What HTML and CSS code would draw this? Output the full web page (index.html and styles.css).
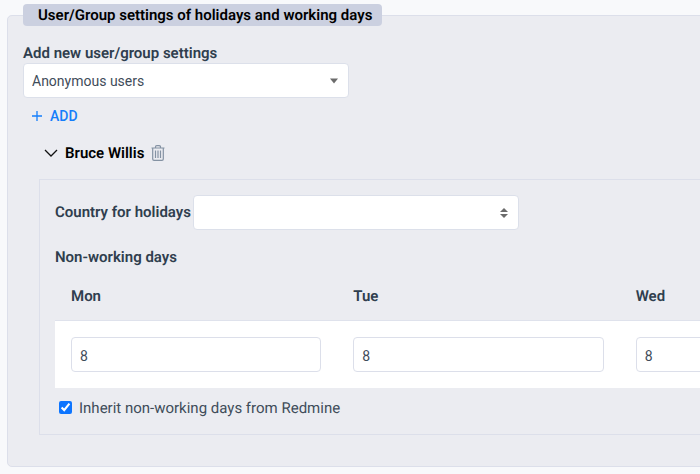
FILE: index.html
```
<!DOCTYPE html>
<html lang="en">
<head>
<meta charset="utf-8">
<title>Holidays and working days</title>
<link rel="stylesheet" href="styles.css">
</head>
<body>
<main class="page">
  <fieldset class="settings">
    <legend class="settings-title">User/Group settings of holidays and working days</legend>
    <label class="field-label" for="group">Add new user/group settings</label>
    <div class="select-box">
      <select class="select" id="group"><option>Anonymous users</option></select>
      <svg class="select-arrow" width="8" height="6" viewBox="0 0 8 6" aria-hidden="true"><path d="M0 .5h8L4 5.5z"/></svg>
    </div>
    <button class="add" type="button">
      <svg width="12" height="12" viewBox="0 0 12 12" aria-hidden="true"><path d="M6 1v10M1 6h10"/></svg>
      ADD
    </button>
    <div class="user">
      <button class="icon-button" type="button" aria-label="Collapse">
        <svg class="chevron" width="14" height="14" viewBox="0 0 14 14" aria-hidden="true"><path d="M1 4l6 6 6-6"/></svg>
      </button>
      <span class="user-name">Bruce Willis</span>
      <button class="icon-button" type="button" aria-label="Delete">
        <svg class="trash" width="14" height="16" viewBox="0 0 14 16" aria-hidden="true"><path d="M.5 3h13M4.500 3V2q0-1.300 1.300-1.300h2.400Q9.500.7 9.500 2v1M1.700 3v11q0 1.300 1.300 1.300h8q1.300 0 1.300-1.300V3M4.500 5.500v7.500M7 5.500v7.500M9.500 5.500v7.500"/></svg>
      </button>
    </div>
    <section class="panel">
      <div class="country">
        <label class="field-label" for="country">Country for holidays</label>
        <div class="select-box">
          <select class="select" id="country"><option></option></select>
          <svg class="select-arrow" width="8" height="10" viewBox="0 0 8 10" aria-hidden="true"><path d="M0 4h8L4 0zM0 6h8l-4 4z"/></svg>
        </div>
      </div>
      <h2 class="heading">Non-working days</h2>
      <table class="days">
        <thead>
          <tr><th id="mon">Mon</th><th id="tue">Tue</th><th id="wed">Wed</th></tr>
        </thead>
        <tbody>
          <tr>
            <td><input class="hours" type="text" value="8" aria-labelledby="mon"></td>
            <td><input class="hours" type="text" value="8" aria-labelledby="tue"></td>
            <td><input class="hours" type="text" value="8" aria-labelledby="wed"></td>
          </tr>
        </tbody>
      </table>
      <label class="inherit"><input class="check" type="checkbox" checked>Inherit non-working days from Redmine</label>
    </section>
  </fieldset>
</main>
</body>
</html>
```
FILE: styles.css
```
* { box-sizing: border-box; }
body {
  margin: 0;
  background: #f8f9fb;
  color: #2f3e4e;
  font: 15px/20px Roboto, sans-serif;
  text-rendering: geometricPrecision;
}
.page { overflow: hidden; padding: 4px 0 7px 7px; }
.settings {
  min-width: 0;
  margin: 0 -8px 0 0;
  padding: 17px 0 31px 15px;
  border: 1px solid #dcdfea;
  border-radius: 5px;
  background: #ebecf1;
}
.settings-title {
  padding: 1px 10px 0 15px;
  border-radius: 4px;
  background: #cbd0e0;
  color: #000;
  font-weight: 600;
  line-height: 21px;
}
.field-label, .heading, .days th { font-weight: 600; }
.select-box { position: relative; width: 326px; }
.select {
  display: block;
  width: 100%;
  height: 35px;
  padding: 0 8px;
  border: 1px solid #dce0ea;
  border-radius: 4px;
  background: #fff;
  color: #3f4c5a;
  font: inherit;
  font-size: 14px;
  appearance: none;
}
.select-arrow {
  position: absolute;
  top: 0;
  bottom: 0;
  right: 11px;
  margin: auto 0;
  fill: #6b6b6b;
  pointer-events: none;
}
button {
  padding: 0;
  border: 0;
  background: none;
  font: inherit;
}
svg { display: block; fill: none; }
.add {
  display: flex;
  align-items: center;
  gap: 7px;
  margin: 8px 0 0 8px;
  color: #157efb;
  font-size: 14px;
  font-weight: 500;
}
.add svg { stroke: #157efb; stroke-width: 1.3; }
.user {
  display: flex;
  align-items: center;
  gap: 7px;
  margin: 17px 0 0 21px;
  color: #000;
}
.user-name { font-weight: 600; }
.chevron { stroke: #111; stroke-width: 1.3; }
.trash { stroke: #8492a3; stroke-width: 1.2; }
.panel {
  margin: 16px 0 0 16px;
  padding: 15px 0 16px 15px;
  border: 1px solid #dcdfea;
}
.country { display: flex; gap: 2px; }
.country .field-label { padding-top: 7px; }
.heading { margin: 17px 0 0; font-size: 15px; }
.days {
  width: 847px;
  margin-top: 8px;
  border-collapse: collapse;
  table-layout: fixed;
}
.days th { height: 45px; padding: 0 16px 2px; text-align: left; }
.days tbody { border-top: 1px solid #dfe2ec; background: #fff; }
.days td { padding: 16px; }
.hours {
  display: block;
  width: 100%;
  height: 35px;
  padding: 3px 8px 0;
  border: 1px solid #dcdfea;
  border-radius: 4px;
  background: #fff;
  color: #3f4c5a;
  font: inherit;
  font-size: 14px;
}
.inherit {
  display: flex;
  align-items: center;
  gap: 7px;
  margin: 10px 0 0 4px;
  color: #3f4c5a;
}
.check { width: 13px; height: 13px; margin: 0; accent-color: #0d75ff; }
```
